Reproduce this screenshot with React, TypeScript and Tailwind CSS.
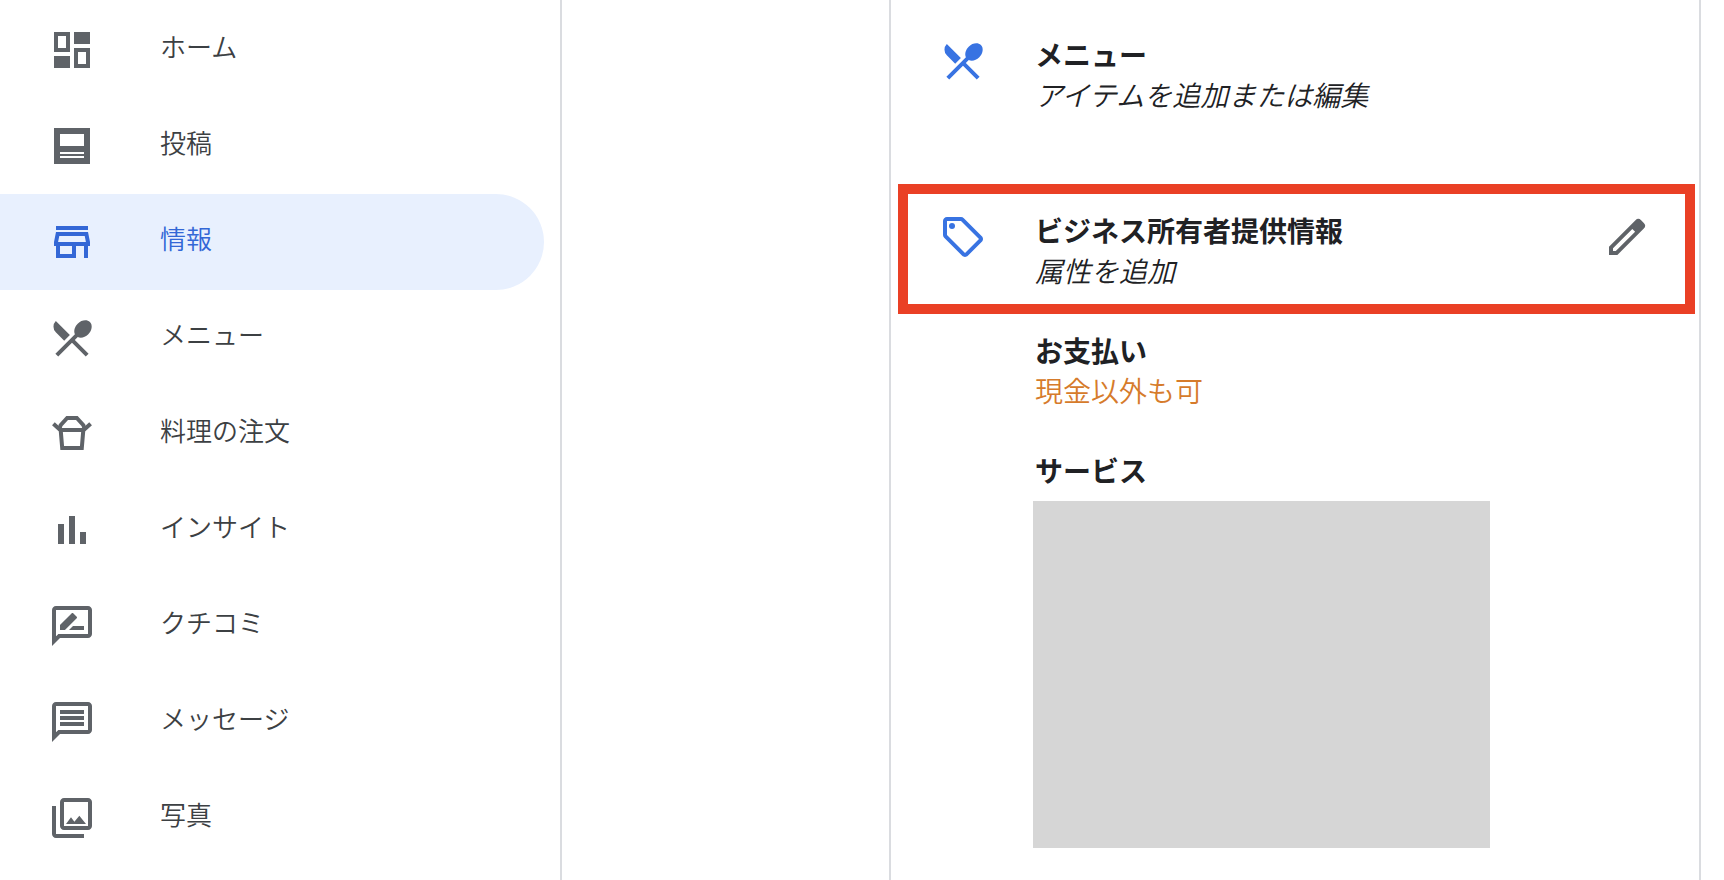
import {
  MdOutlineLocalOffer,
  MdOutlineMessage,
  MdOutlinePhotoLibrary,
  MdOutlineRateReview,
  MdOutlineStore,
  MdRestaurantMenu,
} from "react-icons/md";

const DashboardIcon = () => (
  <svg viewBox="0 0 24 24" width="48" height="48" fill="currentColor">
    <path
      fillRule="evenodd"
      d="M3 3h8v10H3zM5 5v6h4V5zM13 3h8v6h-8zM13 11h8v10h-8zM15 13v6h4v-6zM3 15h8v6H3z"
    />
  </svg>
);

const PostIcon = () => (
  <svg viewBox="0 0 24 24" width="48" height="48" fill="currentColor">
    <path
      fillRule="evenodd"
      d="M3 3h18v18H3zM6 6v6h12V6zM6 15v1h12v-1zM6 17v1h12v-1z"
    />
  </svg>
);

const TakeoutIcon = () => (
  <svg
    viewBox="0 0 24 24"
    width="48"
    height="48"
    fill="none"
    stroke="currentColor"
    strokeWidth="2"
  >
    <path d="M2.7 6.9 6 9.9M21.3 6.9 18 9.9" />
    <path d="M5.7 9.6 6.3 7.6 9.6 4h4.8l3.3 3.6.6 2M6 10h12M6.3 9.5 7.1 19h9.8l.8-9.5" />
  </svg>
);

const InsightIcon = () => (
  <svg viewBox="0 0 24 24" width="48" height="48" fill="currentColor">
    <path d="M5 9h3v10H5zM10.5 5h3v14h-3zM16 13h3v6h-3z" />
  </svg>
);

const PencilIcon = () => (
  <svg viewBox="0 0 24 24" width="48" height="48" fill="currentColor">
    <path
      fillRule="evenodd"
      d="M20.41 4.94 19.06 3.59a2 2 0 0 0-2.82 0L3 16.82V21h4.18L20.41 7.76a2 2 0 0 0 0-2.82zM6.41 19.06H5v-1.41l9.65-9.65 1.41 1.41z"
    />
  </svg>
);

const menuItems = [
  { label: "ホーム", icon: <DashboardIcon /> },
  { label: "投稿", icon: <PostIcon /> },
  { label: "情報", icon: <MdOutlineStore size={48} />, active: true },
  { label: "メニュー", icon: <MdRestaurantMenu size={48} /> },
  { label: "料理の注文", icon: <TakeoutIcon /> },
  { label: "インサイト", icon: <InsightIcon /> },
  { label: "クチコミ", icon: <MdOutlineRateReview size={48} /> },
  { label: "メッセージ", icon: <MdOutlineMessage size={48} /> },
  { label: "写真", icon: <MdOutlinePhotoLibrary size={48} /> },
];

const Sidebar = () => (
  <nav className="w-[562px] shrink-0 border-r-2 border-[#dadce0] pt-0.5 pr-4">
    <ul>
      {menuItems.map((item) => (
        <li key={item.label}>
          <a
            href="#"
            aria-current={item.active ? "page" : undefined}
            className={`flex h-24 items-center gap-16 rounded-r-full pl-12 ${
              item.active ? "bg-[#e8f0fe] text-[#3367d6]" : "text-[#5f6368]"
            }`}
          >
            {item.icon}
            <span
              className={`pb-2 text-[26px] leading-10 ${
                item.active ? "text-[#3367d6]" : "text-[#3c4043]"
              }`}
            >
              {item.label}
            </span>
          </a>
        </li>
      ))}
    </ul>
  </nav>
);

export default function App() {
  return (
    <div className="flex min-h-screen bg-white font-['Noto_Sans_CJK_JP',sans-serif] font-[350]">
      <Sidebar />

      <main className="flex flex-1 pr-[23px] pl-[327px]">
        <div className="flex-1 border-x-2 border-[#dadce0] pr-1 pl-[7px] text-[28px] leading-10 text-[#202124]">
          {/* メニュー */}
          <section className="flex gap-12 pt-[34px] pl-[41px]">
            <MdRestaurantMenu size={48} className="mt-[3px] text-[#3873e2]" />
            <div>
              <h2 className="font-bold">メニュー</h2>
              <p className="italic">アイテムを追加または編集</p>
            </div>
          </section>

          {/* 属性 */}
          <section className="mt-[70px] flex gap-12 border-10 border-[#ea4025] pt-4 pr-[34px] pb-3.5 pl-[31px]">
            <MdOutlineLocalOffer size={48} className="mt-[3px] text-[#3873e2]" />
            <div className="flex-1">
              <h2 className="font-bold">ビジネス所有者提供情報</h2>
              <p className="italic">属性を追加</p>
            </div>
            <button
              type="button"
              aria-label="編集"
              className="mt-[3px] h-12 w-12 text-[#5f6368]"
            >
              <PencilIcon />
            </button>
          </section>

          <section className="mt-4 pl-[137px]">
            <h3 className="font-bold">お支払い</h3>
            <p className="text-[#d67b2b]">現金以外も可</p>
          </section>

          <section className="mt-10 pl-[135px]">
            <h3 className="pl-0.5 font-bold">サービス</h3>
            <div className="mt-[11px] h-[347px] w-[457px] bg-[#d6d6d6]" />
          </section>
        </div>
      </main>
    </div>
  );
}
